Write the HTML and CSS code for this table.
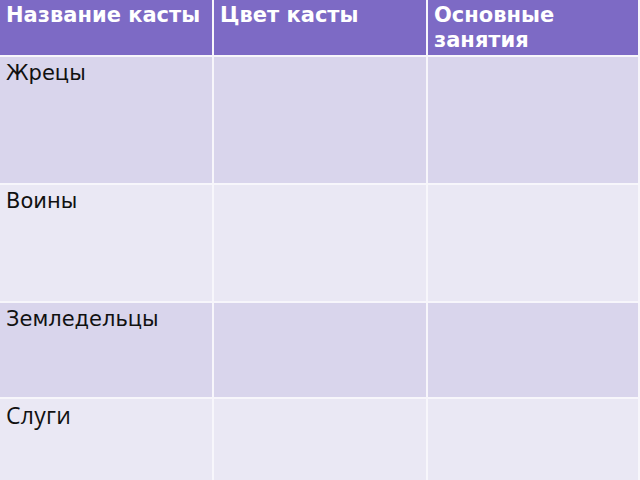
FILE: index.html
```html
<!DOCTYPE html>
<html lang="ru">
<head>
<meta charset="utf-8">
<title>Касты</title>
<link rel="stylesheet" href="styles.css">
</head>
<body>
<div class="table">
  <div class="cell head">Название касты</div>
  <div class="cell head">Цвет касты</div>
  <div class="cell head">Основные занятия</div>

  <div class="cell odd">Жрецы</div>
  <div class="cell odd"></div>
  <div class="cell odd"></div>

  <div class="cell even">Воины</div>
  <div class="cell even"></div>
  <div class="cell even"></div>

  <div class="cell odd">Земледельцы</div>
  <div class="cell odd"></div>
  <div class="cell odd"></div>

  <div class="cell even alt-font">Слуги</div>
  <div class="cell even"></div>
  <div class="cell even"></div>
</div>
</body>
</html>
```

FILE: styles.css
```css
html, body {
  margin: 0;
  padding: 0;
  width: 640px;
  height: 480px;
  overflow: hidden;
  background: #f7f6fb;
}

.table {
  display: grid;
  grid-template-columns: 212px 212px 210px;
  grid-template-rows: 55px 126px 116px 94px 100px;
  gap: 2px;
  width: 638px;
  background: #f7f6fb;
}

.cell {
  padding: 4px 6px 0 6px;
  font-family: "DejaVu Sans", sans-serif;
  font-size: 21px;
  line-height: 24px;
  color: #111;
}

.head {
  background: #7d6ac5;
  color: #fff;
  font-weight: bold;
  font-size: 21px;
  line-height: 25px;
  padding-top: 3px;
}

.odd {
  background: #d9d5ec;
}

.even {
  background: #eae8f4;
}

.alt-font {
  font-family: "Open Sans", sans-serif;
  font-size: 23px;
  letter-spacing: 0.3px;
  padding-top: 4px;
}
```
